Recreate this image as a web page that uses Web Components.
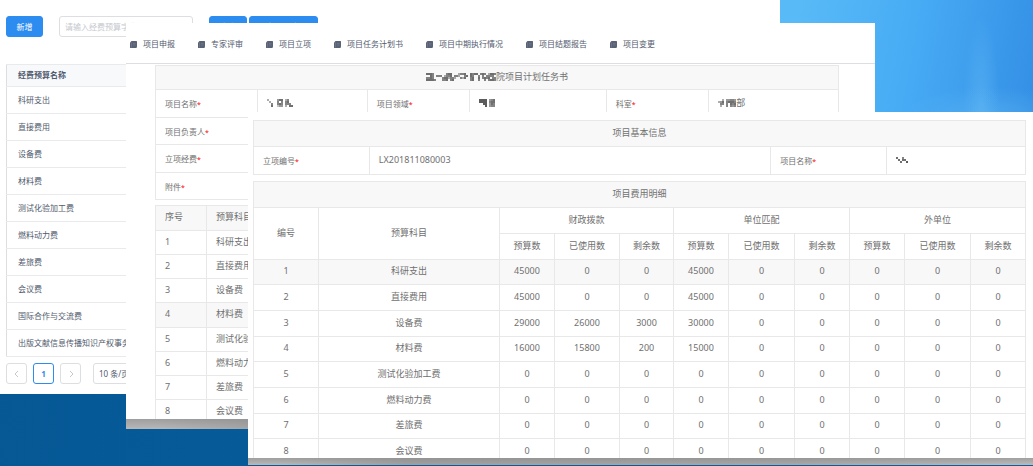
<!DOCTYPE html>
<html lang="zh-CN">
<head>
<meta charset="utf-8">
<title>科研项目经费管理</title>
<style>
  html, body { height: 100%; }
  body {
    margin: 0;
    overflow: hidden;
    font-family: "Noto Sans", "Noto Sans CJK SC", sans-serif;
    color: #515a6e;
  }
</style>
</head>
<body>

<desk-top>
  <desk-window style="--left:0; --right:253px; --top:0; --bottom:72px;">
    <budget-page></budget-page>
  </desk-window>

  <desk-window framed style="--left:126px; --right:158px; --top:23px; --bottom:37px; --foot:10px;">
    <nav-menu>
      <nav-item>项目申报</nav-item>
      <nav-item>专家评审</nav-item>
      <nav-item>项目立项</nav-item>
      <nav-item>项目任务计划书</nav-item>
      <nav-item>项目中期执行情况</nav-item>
      <nav-item>项目结题报告</nav-item>
      <nav-item>项目变更</nav-item>
    </nav-menu>
    <task-book></task-book>
  </desk-window>

  <desk-window framed style="--left:248px; --right:0; --top:112px; --bottom:1px; --foot:7px;">
    <fee-detail></fee-detail>
  </desk-window>
</desk-top>

<script>
//-----------------------------------------------
// shared bits
//-----------------------------------------------
const gridStyles = `
  * { box-sizing: border-box; }
  table {
    width: 100%;
    border-collapse: collapse;
    table-layout: fixed;
    line-height: 12px;
    font-size: 9px;
    color: #707070;
  }
  th, td {
    border: 1px solid #e8e8e8;
    padding: 0 9px 2px;
    font-weight: normal;
    text-align: left;
    white-space: nowrap;
    overflow: hidden;
  }
  .title { background: #f8f8f8; text-align: center; }
  .label { font-size: 8px; padding-top: 2px; padding-bottom: 0; }
  .label i { color: #f00; font-style: normal; font-size: 7px; }
`;

const budgetNames = [
  '科研支出', '直接费用', '设备费', '材料费', '测试化验加工费',
  '燃料动力费', '差旅费', '会议费', '国际合作与交流费', '出版文献信息传播知识产权事务费'
];

//-----------------------------------------------
// desktop and its windows
//-----------------------------------------------
class DeskTop extends HTMLElement {
  constructor() {
    super();
    this.attachShadow({ mode: 'open' }).innerHTML = `
      <style>
        :host {
          display: block; position: relative;
          height: 100%; overflow: hidden;
          background:
            linear-gradient(100deg, #055894, #075d9c 60%, #0a5f9f) bottom / 100% 75% no-repeat,
            #46a9f3;
        }
        .sky {
          height: 25%;
          background:
            radial-gradient(ellipse 90px 30px at 96% 100%, #6bbff566, transparent),
            radial-gradient(ellipse 18px 90px at 95% 90%, #6bbff566, transparent),
            linear-gradient(100deg, #58baf6 76%, #48acf5 87%, #3f9fee 93%, #338fe5);
        }
      </style>
      <div class="sky"></div>
      <slot></slot>
    `;
  }
}

class DeskWindow extends HTMLElement {
  constructor() {
    super();
    this.attachShadow({ mode: 'open' }).innerHTML = `
      <style>
        :host {
          position: absolute;
          left: var(--left); right: var(--right);
          top: var(--top); bottom: var(--bottom);
          display: flex; flex-direction: column;
        }
        .body { flex: 1; min-height: 0; overflow: hidden; background: #fff; }
        .foot { display: none; }
        :host([framed]) .foot {
          display: block;
          flex: 0 0 var(--foot);
          background:
            linear-gradient(#8888, #8880),
            linear-gradient(90deg, #b8b8b8 4%, #b0b0b0 9%, #a0a0a0 20%, #a8a8a8 70%, #bcbcbc);
        }
      </style>
      <div class="body"><slot></slot></div>
      <div class="foot"></div>
    `;
  }
}

//-----------------------------------------------
// masked text: rows of grey levels, "/" between rows
// 0 = clear, 9 = darkest
//-----------------------------------------------
class MaskedText extends HTMLElement {
  connectedCallback() {
    const rows = this.getAttribute('cells').split('/');
    const cell = 2;
    let rects = '';
    rows.forEach((row, y) => {
      [...row].forEach((level, x) => {
        if (level === '0') return;
        rects += `<rect x="${x * cell}" y="${y * cell}" width="${cell}" height="${cell}" opacity="${level / 10}"/>`;
      });
    });
    const w = rows[0].length * cell;
    const h = rows.length * cell;
    const shadow = this.shadowRoot || this.attachShadow({ mode: 'open' });
    shadow.innerHTML = `
      <style>
        :host { display: inline-block; vertical-align: middle; line-height: 0; }
      </style>
      <svg width="${w}" height="${h}" fill="#333" shape-rendering="crispEdges" aria-hidden="true">${rects}</svg>
    `;
  }
}

//-----------------------------------------------
// top menu of the project window
//-----------------------------------------------
class NavMenu extends HTMLElement {
  constructor() {
    super();
    this.attachShadow({ mode: 'open' }).innerHTML = `
      <style>
        :host { display: block; border-bottom: 1px solid #dcdee2; }
        nav {
          display: flex; align-items: center; gap: 23px;
          padding: 15px 4px 13px;
        }
      </style>
      <nav><slot></slot></nav>
    `;
  }
}

class NavItem extends HTMLElement {
  constructor() {
    super();
    this.attachShadow({ mode: 'open' }).innerHTML = `
      <style>
        :host { display: block; flex: none; }
        a {
          display: flex; align-items: center; gap: 6px;
          font-size: 8px; line-height: 12px;
          color: #515a6e; text-decoration: none; white-space: nowrap;
        }
      </style>
      <a href="#">
        <svg width="7" height="7" viewBox="0 0 14 14" aria-hidden="true">
          <path fill="#5a6376" d="M3 0h10a1 1 0 0 1 1 1v10l-1 3H1a1 1 0 0 1-1-1V3z"/>
          <path stroke="#7d8594" d="M3 3v10M6 5h5M6 8h5"/>
        </svg>
        <slot></slot>
      </a>
    `;
  }
}

//-----------------------------------------------
// window 1: budget names
//-----------------------------------------------
class BudgetPage extends HTMLElement {
  constructor() {
    super();
    this.attachShadow({ mode: 'open' }).innerHTML = `
      <style>
        ${gridStyles}
        :host { display: block; padding: 16px 0 0 6px; font-size: 8px; }
        button, input, select {
          height: 21px; margin: 0;
          font: inherit; line-height: 12px;
          border: 1px solid #dcdee2; border-radius: 3px;
          background: #fff; color: #515a6e;
        }
        .tools { display: flex; margin-bottom: 27px; }
        .tools button { width: 37px; padding: 0; background: #2d8cf0; border-color: #2d8cf0; color: #fff; }
        .tools input { width: 134px; margin: 0 16px; padding: 0 5px; }
        .tools input::placeholder { color: #c5c8ce; opacity: 1; }
        .tools .query { width: 38px; margin-right: 2px; }
        .tools .export { width: 69px; }
        table { border: 1px solid #dcdee2; font-size: 8px; color: #515a6e; }
        th, td { height: 27px; padding: 0 11px 1px; border-color: #e8eaec; border-width: 1px 0; }
        th { height: 22px; background: #f8f9fb; font-weight: bold; }
        .pages { display: flex; gap: 6px; padding-top: 6px; }
        .pages button { width: 21px; padding: 0; }
        .pages .on { border-color: #2d8cf0; color: #2d8cf0; font-weight: bold; }
        .pages svg { display: block; margin: auto; }
        .pages select { margin-left: 6px; width: 60px; padding: 0 1px; }
      </style>
      <div class="tools">
        <button>新增</button>
        <input type="text" aria-label="经费预算名称" placeholder="请输入经费预算字典名称">
        <button class="query">查询</button>
        <button class="export">导出Excel数据</button>
      </div>
      <table>
        <thead><tr><th>经费预算名称</th></tr></thead>
        <tbody>${budgetNames.map(n => `<tr><td>${n}</td></tr>`).join('')}</tbody>
      </table>
      <div class="pages">
        <button aria-label="上一页"><svg width="6" height="8" fill="none" stroke="#c5c8ce"><path d="M4 1L1 4l3 3"/></svg></button>
        <button class="on">1</button>
        <button aria-label="下一页"><svg width="6" height="8" fill="none" stroke="#c5c8ce"><path d="M2 1l3 3-3 3"/></svg></button>
        <select aria-label="每页条数"><option>10 条/页</option></select>
      </div>
    `;
  }
}

//-----------------------------------------------
// window 2: project task book
//-----------------------------------------------
class TaskBook extends HTMLElement {
  constructor() {
    super();
    const items = budgetNames.slice(0, 8).map((name, i) => `
      <tr><td>${i + 1}</td><td>${name}</td></tr>`).join('');

    this.attachShadow({ mode: 'open' }).innerHTML = `
      <style>
        ${gridStyles}
        :host { display: block; padding: 1px 36px 0 29px; }
        .form td { height: 27px; }
        .form tr:nth-child(even) td { height: 28px; }
        .form tr .title { height: 24px; }
        .items { margin-top: 5px; }
        .items th { height: 25px; background: #f8f8f8; }
        .items td { height: 24px; }
        .items tr:nth-child(4n) td { height: 25px; }
        .items tr:nth-child(4) td { background: #f8f8f8; }
      </style>
      <table class="form">
        <colgroup>
          <col style="width:15%"><col style="width:16%"><col style="width:15%">
          <col style="width:20%"><col style="width:15%"><col style="width:19%">
        </colgroup>
        <tr><th class="title" colspan="6"><masked-text cells="77760000006770004667007677067604776/00760666046670664006707600606066660/66760000677466400647006700706767066/77776000667067000000006700600606776"></masked-text>院项目计划任务书</th></tr>
        <tr>
          <td class="label">项目名称<i>*</i></td>
          <td><masked-text cells="4000057704600/0400060606700/0060067606660/0070035504077"></masked-text></td>
          <td class="label">项目领域<i>*</i></td>
          <td><masked-text cells="88880567/88880677/00880576/00080566"></masked-text></td>
          <td class="label">科室<i>*</i></td>
          <td><masked-text cells="004055665/457067776/066060767/040060656"></masked-text>部</td>
        </tr>
        <tr><td class="label">项目负责人<i>*</i></td><td colspan="5"></td></tr>
        <tr><td class="label">立项经费<i>*</i></td><td colspan="5"></td></tr>
        <tr><td class="label">附件<i>*</i></td><td colspan="5"></td></tr>
      </table>
      <table class="items">
        <colgroup><col style="width:51px"><col></colgroup>
        <thead><tr><th>序号</th><th>预算科目</th></tr></thead>
        <tbody>${items}</tbody>
      </table>
    `;
  }
}

//-----------------------------------------------
// window 3: project fee detail
//-----------------------------------------------
class FeeDetail extends HTMLElement {
  constructor() {
    super();
    const amounts = [
      [45000, 0, 0, 45000],
      [45000, 0, 0, 45000],
      [29000, 26000, 3000, 30000],
      [16000, 15800, 200, 15000]
    ];
    const rows = budgetNames.slice(0, 8).map((name, i) => {
      const sums = Array.from({ length: 9 }, (_, n) => (amounts[i] || [])[n] || 0);
      return `<tr><td>${i + 1}</td><td>${name}</td>${sums.map(s => `<td>${s}</td>`).join('')}</tr>`;
    }).join('');
    const sources = ['财政拨款', '单位匹配', '外单位'];
    const parts = '<th>预算数</th><th>已使用数</th><th>剩余数</th>';
    const widths = [55, 65, 54, 55, 66, 55, 55, 66, 55];

    this.attachShadow({ mode: 'open' }).innerHTML = `
      <style>
        ${gridStyles}
        :host { display: block; padding: 8px 7px 0 5px; }
        .title, .fees th, .fees td { height: 26px; }
        .info td { height: 28px; }
        .fees { margin-top: 6px; }
        .fees th, .fees td { text-align: center; padding: 0 0 2px; }
        .fees tbody tr:nth-child(3n + 1) td { height: 25px; }
        .fees tbody tr:first-child td { background: #f8f8f8; }
      </style>
      <table class="info">
        <colgroup><col style="width:15%"><col style="width:52%"><col style="width:15%"><col></colgroup>
        <tr><th class="title" colspan="4">项目基本信息</th></tr>
        <tr>
          <td class="label">立项编号<i>*</i></td>
          <td>LX201811080003</td>
          <td class="label">项目名称<i>*</i></td>
          <td><masked-text cells="700600/070770/007008"></masked-text></td>
        </tr>
      </table>
      <table class="fees">
        <colgroup>
          <col style="width:65px"><col>
          ${widths.map(w => `<col style="width:${w}px">`).join('')}
        </colgroup>
        <thead>
          <tr><th class="title" colspan="11">项目费用明细</th></tr>
          <tr>
            <th rowspan="2">编号</th><th rowspan="2">预算科目</th>
            ${sources.map(s => `<th colspan="3">${s}</th>`).join('')}
          </tr>
          <tr>${parts.repeat(3)}</tr>
        </thead>
        <tbody>${rows}</tbody>
      </table>
    `;
  }
}

customElements.define('masked-text', MaskedText);
customElements.define('desk-top', DeskTop);
customElements.define('desk-window', DeskWindow);
customElements.define('nav-menu', NavMenu);
customElements.define('nav-item', NavItem);
customElements.define('budget-page', BudgetPage);
customElements.define('task-book', TaskBook);
customElements.define('fee-detail', FeeDetail);
</script>
</body>
</html>
